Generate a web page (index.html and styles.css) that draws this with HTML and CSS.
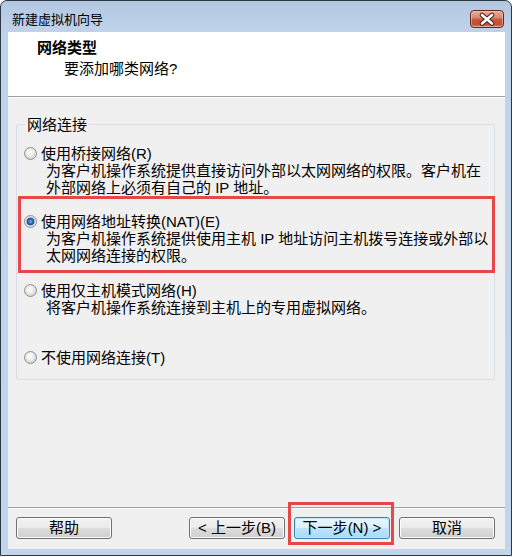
FILE: index.html
```html
<!DOCTYPE html>
<html lang="zh-CN">
<head>
<meta charset="utf-8">
<title>新建虚拟机向导</title>
<link rel="stylesheet" href="styles.css">
</head>
<body>
<div class="window">
  <div class="titlebar">
    <span class="title">新建虚拟机向导</span>
    <span class="close">
      <svg width="34" height="18" viewBox="0 0 34 18">
        <path d="M12 5 L22 13.5 M22 5 L12 13.5" stroke="#3b2620" stroke-width="4.6" stroke-linecap="round" fill="none"/>
        <path d="M12 5 L22 13.5 M22 5 L12 13.5" stroke="#ffffff" stroke-width="2.6" stroke-linecap="round" fill="none"/>
      </svg>
    </span>
  </div>
  <div class="client">
    <div class="header">
      <div class="h-title">网络类型</div>
      <div class="h-sub">要添加哪类网络?</div>
    </div>
    <div class="main">
      <fieldset class="group">
        <legend>网络连接</legend>
        <div class="option opt1">
          <span class="radio"></span>
          <span class="label">使用桥接网络<span class="acc">(R)</span></span>
          <div class="desc">为客户机操作系统提供直接访问外部以太网网络的权限。客户机在<br>外部网络上必须有自己的 IP 地址。</div>
        </div>
        <div class="option opt2 marked">
          <span class="radio checked"></span>
          <span class="label">使用网络地址转换<span class="acc">(NAT)(E)</span></span>
          <div class="desc">为客户机操作系统提供使用主机 IP 地址访问主机拨号连接或外部以<br>太网网络连接的权限。</div>
        </div>
        <div class="option opt3">
          <span class="radio"></span>
          <span class="label">使用仅主机模式网络<span class="acc">(H)</span></span>
          <div class="desc">将客户机操作系统连接到主机上的专用虚拟网络。</div>
        </div>
        <div class="option opt4">
          <span class="radio"></span>
          <span class="label">不使用网络连接<span class="acc">(T)</span></span>
        </div>
      </fieldset>
    </div>
    <div class="footer">
      <button class="btn">帮助</button>
      <div class="spacer"></div>
      <div class="nav">
        <button class="btn">&lt; 上一步<span class="acc">(B)</span></button>
        <span class="focus-mark"><button class="btn default">下一步<span class="acc">(N)</span> &gt;</button></span>
        <button class="btn">取消</button>
      </div>
    </div>
  </div>
</div>
</body>
</html>
```
FILE: styles.css
```css
* { box-sizing: border-box; }
html, body {
  margin: 0;
  padding: 0;
  background: #ffffff;
}
body {
  font-family: "Liberation Sans", "Noto Sans CJK SC", sans-serif;
  font-size: 15px;
  color: #000;
}
.window {
  width: 512px;
  height: 556px;
  border: 1px solid #2e3844;
  border-radius: 7px 7px 0 0;
  background: linear-gradient(to bottom, #b3c7e1 0, #bfd2ea 30px, #c2d5ec 100%);
  padding: 0 6px 6px 7px;
  display: flex;
  flex-direction: column;
}
.titlebar {
  height: 31px;
  margin: 0 -6px 0 -7px;
  padding: 0 7px 0 11px;
  display: flex;
  align-items: flex-start;
  justify-content: space-between;
  flex: none;
}
.title {
  font-size: 13px;
  line-height: 17px;
  margin-top: 10px;
  color: #000;
}
.close {
  margin-top: 9px;
  width: 34px;
  height: 18px;
  border: 1px solid #6b261a;
  border-radius: 4px;
  background: linear-gradient(to bottom, #e8aa98 0, #d98a74 40%, #c8533b 55%, #c2513a 85%, #d98a6c 100%);
  box-shadow: inset 0 0 0 1px rgba(255, 220, 210, 0.45);
  display: flex;
  align-items: center;
  justify-content: center;
  overflow: hidden;
}
.close svg { display: block; margin: -1px; }
.client {
  flex: 1;
  background: #f0f0f0;
  display: flex;
  flex-direction: column;
}
.header {
  height: 65px;
  flex: none;
  background: #fff;
  border-bottom: 1px solid #a0a0a0;
  padding: 7px 0 0 29px;
}
.h-title {
  font-weight: bold;
  line-height: 17px;
}
.h-sub {
  line-height: 17px;
  margin: 4px 0 0 27px;
}
.main {
  flex: 1;
  border-top: 1px solid #fff;
  padding: 0 10px 0 8px;
}
.group {
  margin: 18px 0 0 0;
  padding: 12px 0 13px 0;
  border: 1px solid #d5dfe5;
  border-radius: 3px;
  min-width: 0;
}
.group legend {
  margin-left: 8px;
  padding: 0 2px;
  line-height: 17px;
}
.option {
  display: grid;
  grid-template-columns: 13px auto;
  column-gap: 4px;
  padding-left: 7px;
  line-height: 17px;
  position: relative;
}
.opt2 { margin-top: 17px; }
.opt3 { margin-top: 18px; }
.opt4 { margin-top: 33px; }
.radio {
  grid-column: 1;
  grid-row: 1;
  align-self: center;
  width: 13px;
  height: 13px;
  border-radius: 50%;
  border: 1px solid #8d9196;
  background: radial-gradient(circle at 45% 40%, #ffffff 0, #f0f0f0 3px, #d4d6d8 6px);
}
.radio.checked {
  background: radial-gradient(circle at 50% 50%, #8cc1ec 0, #3b7cc2 1.5px, #1d4f8e 3.5px, #c9d4df 4.2px, #eef0f2 6px);
}
.label {
  grid-column: 2;
  grid-row: 1;
  white-space: nowrap;
}
.desc {
  grid-column: 2;
  grid-row: 2;
  padding-left: 5px;
  white-space: nowrap;
}
.acc { color: #000; }
.marked::after {
  content: "";
  position: absolute;
  top: -17px;
  bottom: -9px;
  left: 1px;
  right: -1px;
  border: 3px solid #e8474a;
  pointer-events: none;
}
.footer {
  flex: none;
  height: 42px;
  border-top: 1px solid #a0a0a0;
  box-shadow: inset 0 1px 0 #ffffff;
  padding: 9px 10px 0 8px;
  display: flex;
  align-items: flex-start;
}
.spacer { flex: 1; }
.nav {
  display: flex;
  gap: 9px;
}
.btn {
  width: 96px;
  height: 22px;
  padding: 0;
  font-family: "Liberation Sans", "Noto Sans CJK SC", sans-serif;
  font-size: 15px;
  line-height: 18px;
  color: #000;
  border: 1px solid #707070;
  border-radius: 3px;
  background: linear-gradient(to bottom, #f2f2f2 0, #ebebeb 50%, #dddddd 50%, #cfcfcf 100%);
  box-shadow: inset 0 0 0 1px #fcfcfc;
}
.btn.default {
  border-color: #3c7fb1;
  background: linear-gradient(to bottom, #eaf6fd 0, #d9f0fc 50%, #bee6fd 50%, #a7d9f5 100%);
  box-shadow: inset 0 0 0 1px #c5e6f8;
}
.focus-mark {
  position: relative;
  display: block;
}
.focus-mark .btn { display: block; }
.focus-mark::after {
  content: "";
  position: absolute;
  top: -15px;
  bottom: -6px;
  left: -6px;
  right: -4px;
  border: 3px solid #e8474a;
  pointer-events: none;
}
```
